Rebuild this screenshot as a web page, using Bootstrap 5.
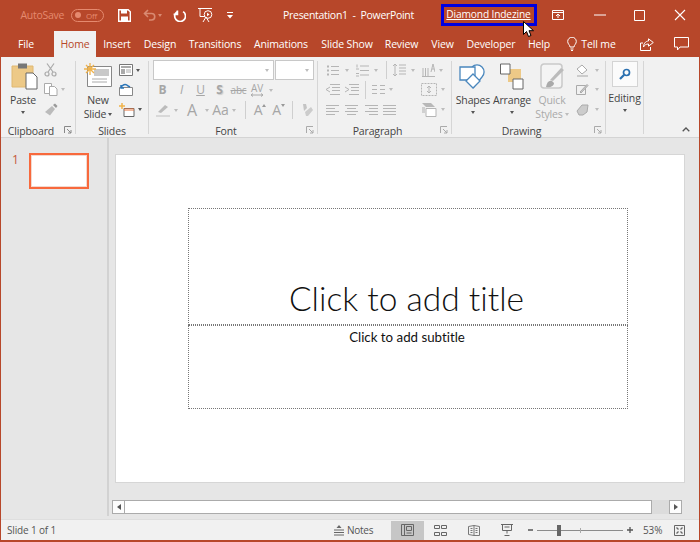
<!DOCTYPE html>
<html lang="en"><head><meta charset="utf-8"><title>PowerPoint</title>
<link href="https://cdn.jsdelivr.net/npm/bootstrap@5.3.0/dist/css/bootstrap.min.css" rel="stylesheet">
<style>
html,body{height:542px;overflow:hidden}
body{width:700px;background:#b7472a;font-family:"Open Sans","Liberation Sans",sans-serif;font-size:10.5px;letter-spacing:-.15px;color:#444;line-height:14px;padding:0 1px 1px 1px}
svg{display:block;flex:none}
.tbar{height:30px;margin-left:-1px;width:700px;color:#fff;display:grid;grid-template-columns:71px 47px 13px 12px 13px 8px 9px 13px 12px 16px 13px 6px 50px 131px 27px 96px 15px 11px 31px 12px 28px 11px 29px 12px;align-items:center;position:relative}
.tbar>*{justify-self:center}
.autosave{justify-self:end;padding-right:7px;color:#e58a6f;letter-spacing:-.3px}
.toggle{justify-self:start;width:33px;height:13px;border:1px solid #e58a6f;border-radius:7px;color:#e58a6f;font-size:8px;line-height:11px;display:flex;align-items:center;gap:5px;padding-left:3px}
.toggle i{width:6px;height:6px;border-radius:50%;background:#e58a6f;display:block}
.doc{white-space:nowrap;letter-spacing:-.3px}
.author{display:block;width:96px;height:22px;border:3px solid #0000e0;color:#fff;text-decoration:underline;text-align:center;line-height:15px;font-size:10.2px;white-space:nowrap;padding-right:1px}
.author:hover{color:#fff}
.cursor{position:absolute;left:523px;top:21px}
.tabs{height:27px;margin-left:-1px;width:700px;color:#fff;display:grid;grid-template-columns:4px 44px 6px 42px 42px 44px 66px 66px 66px 43px 39px 58px 38px 67px 43px 27px;align-items:end}
.tabs>*{height:26px;display:flex;align-items:center;justify-content:center;white-space:nowrap}
.tabs .active{background:#f1f1f1;color:#b7472a}
.ribbon{height:81px;background:#f1f1f1;display:flex;border-bottom:1px solid #d4d4d4}
.group{padding-top:3px;display:flex;flex-direction:column}
.g1{width:74px}.g2{width:72px}.g3{width:168px}.g4{width:133px}.g5{width:153px}.g6{width:37px}
.sep{width:1px;background:#d6d6d6;margin:4px 0 3px}
.body{height:64px;display:flex}
.lbl{height:14px;display:flex;align-items:center}
.lbl span{flex:1;text-align:center;padding-top:1px}
.launch{width:14px;display:flex;justify-content:center}
.big{display:flex;flex-direction:column;align-items:center;white-space:nowrap}
.big .art{height:33px;display:flex;align-items:center;justify-content:center;padding-bottom:1px}
.big .cap{height:14px;display:flex;align-items:center;gap:2px}
.big .car{height:11px;display:flex;align-items:center}
.off{color:#a9a9a9}
.car-i{width:0;height:0;border-left:2.5px solid transparent;border-right:2.5px solid transparent;border-top:3px solid #555;display:block}
.off .car-i,.car-g{border-top-color:#bdbdbd}
.sm{display:flex;flex-direction:column}
.sm>div{display:flex;align-items:center;gap:3px}
.sm>div:nth-child(1){height:20px}.sm>div:nth-child(2){height:19px}.sm>div:nth-child(3){height:21px}
.col-paste{width:40px;margin-left:2px}.clip-s{margin-left:1px}
.col-new{width:36px;margin-left:4px}.new-s{margin-left:3px}
.fields{display:flex;gap:1px;height:20px;margin-left:4px}
.fields div{background:#fff;border:1px solid #c8c8c8;display:flex;align-items:center;justify-content:flex-end;padding-right:4px}
.f1{width:121px}.f2{width:39px}
.frow{display:grid;justify-items:center;align-items:center;margin-left:4px;color:#a6a6a6;font-size:12px;line-height:14px;height:20px}
.fr2{grid-template-columns:19px 19px 19px 19px 19px 18px 10px}
.fr3{grid-template-columns:20px 6px 26px 4px 23px 4px 18px 12px 25px 2px 26px}
.shadow-s{text-shadow:1px 1px 1px #ccc}
.abc{font-size:10px;text-decoration:line-through}
.av{display:flex;flex-direction:column;align-items:center;font-size:10px;line-height:10px}
.big-a{font-size:16px;display:flex}
.mid-a{font-size:14px}
.sup{display:flex;align-items:flex-start;font-size:14px;line-height:14px}
.sup svg{margin-top:1px}
.vb{width:1px;height:18px;background:#cfcfcf}
.prow{display:grid;justify-items:center;align-items:center;margin-left:7px}
.pr1{height:20px;grid-template-columns:15px 14px 16px 12px 8px 18px 10px 21px 4px}
.pr2{height:19px;grid-template-columns:15px 23px 4px 23px 2px 29px 16px 12px}
.pr3{height:21px;grid-template-columns:14px 6px 13px 7px 12px 6px 13px 25px 16px 12px}
.col-sh{width:36px;margin-left:3px}.col-ar{width:38px;margin-left:2px}.col-qs{width:36px;margin-left:3px}
.dr-s{margin-left:6px}.dr-s>div{gap:6px}
.ed-btn{width:26px;height:26px;background:#fbfbfb;border:1px solid #d4d4d4;display:flex;align-items:center;justify-content:center;margin-top:1px}
.ed{width:37px}
.coll{flex:1;display:flex;flex-direction:column;justify-content:flex-end;align-items:flex-end;padding:0 9px 5px 0}
.main{height:381px;background:#e6e6e6;display:flex}
.thumbs{width:108px;border-right:2px solid #d2d2d2;padding:15px 0 0 11px;display:flex;align-items:flex-start;font-size:12px;color:#c4583a;gap:10px;height:378px}
.thumb{width:60px;height:36px;background:#fff;border:2px solid #f8693c;outline:1px solid #f3d9cf;outline-offset:-3px}
.area{flex:1;display:flex;flex-direction:column;min-width:0}
.slide{margin:16px 14px 0 6px;height:329px;background:#fff;border:1px solid #d6d6d6;display:flex;flex-direction:column;align-items:center;padding:53px 0 0 16px}
.ph{width:440px;border:1px dotted #777;text-align:center;color:#111;font-family:Lato,"Liberation Sans",sans-serif;font-variant-ligatures:none;letter-spacing:0}
.ph1{height:117px;font-size:33.500px;font-weight:300;line-height:40px;display:flex;align-items:flex-end;justify-content:center;padding:0 3px 6px 0}
.ph2{height:84px;font-size:13.300px;line-height:20px;padding:1px 2px 0 0}
.hs{margin:17px 17px 0 3px;height:14px;display:flex;align-items:stretch}
.hbtn{width:13px;background:#fdfdfd;border:1px solid #ababab;display:flex;align-items:center;justify-content:center}
.hthumb{flex:1;background:#fff;border:1px solid #ababab;margin-left:-1px}
.htrack{width:17px;background:#dcdcdc}
.status{height:21px;background:#f1f1f1;border-top:1px solid #dedede;display:flex;align-items:center;padding:0 14px 0 6px;font-size:10px;color:#555}
.spacer{flex:1}
.notes{display:flex;align-items:center;gap:3px;width:57px;letter-spacing:-.25px}
.view{height:19px;display:flex;align-items:center;justify-content:center;width:33px}
.view.on{background:#c6c6c6}
.zoom{display:flex;align-items:center;margin-left:5px}
.ztrack{width:86px;height:1px;background:#8c8c8c;margin:0 4px;display:flex;justify-content:center;position:relative}
.zthumb{position:absolute;left:20px;top:-5px;width:4px;height:11px;background:#666}
.zmid{width:1px;height:5px;margin-top:-2px;background:#aaa}
.pct{margin-left:10px;width:31px}
</style></head><body>

<header class="tbar">
 <span class="autosave">AutoSave</span>
 <span class="toggle"><i></i>Off</span>
 <svg width="13" height="13" viewBox="0 0 13 13"><path d="M.7.7h9.500l2.100 2.100v9.500H.7z" fill="none" stroke="#fff" stroke-width="1.400"/><path d="M3 1h6v3.500H3zM3 7.500h7V12H3z" fill="#fff"/></svg>
 <span></span>
 <svg width="13" height="12" viewBox="0 0 13 12"><path d="M5 1 1.500 4.500 5 8M2 4.500h6.500a3.200 3.200 0 0 1 0 6.500H6" fill="none" stroke="#d98a72" stroke-width="1.600"/></svg>
 <span class="car-i" style="border-top-color:#d98a72"></span>
 <span></span>
 <svg width="13" height="13" viewBox="0 0 13 13"><path d="M3.500 1.800A5.400 5.400 0 1 0 9.500 1.800M3.800 .6v4H0" fill="none" stroke="#fff" stroke-width="1.700" transform="translate(.6 .8)"/></svg>
 <span></span>
 <svg width="16" height="16" viewBox="0 0 16 16" fill="none" stroke="#fff"><path d="M0 1.500h14M2 1.500v8h5M8 10l-3 5M8 10l3 5"/><circle cx="10" cy="7.500" r="3.800"/><path d="M9 5.800v3.400l2.600-1.700z" fill="#fff" stroke="none"/></svg>
 <span></span>
 <svg width="6" height="7" viewBox="0 0 6 7"><path d="M0 0h6v1H0zM0 3h6L3 6.500z" fill="#fff"/></svg>
 <span></span>
 <span class="doc">Presentation1 &nbsp;-&nbsp; PowerPoint</span>
 <span></span>
 <a class="author" href="#">Diamond Indezine</a>
 <span></span>
 <svg width="12" height="10" viewBox="0 0 12 10" fill="none" stroke="#fff"><path d="M.5.500h11v9H.5zM.5 2.500h11M6 8V4M4 6l2-2 2 2"/></svg>
 <span></span>
 <svg width="12" height="2" viewBox="0 0 12 2"><path d="M0 1h12" stroke="#fff"/></svg>
 <span></span>
 <svg width="11" height="11" viewBox="0 0 11 11"><path d="M.5.500h10v10H.5z" fill="none" stroke="#fff"/></svg>
 <span></span>
 <svg width="12" height="12" viewBox="0 0 12 12"><path d="M1 1l10 10M11 1 1 11" stroke="#fff" stroke-width="1.100"/></svg>
 <svg class="cursor" width="11" height="17" viewBox="0 0 11 17"><path d="M.5.500v13l3-3 2 5 2.500-1-2-4.800h4.500z" fill="#fff" stroke="#000"/></svg>
</header>

<nav class="tabs">
 <span></span><span>File</span><span></span><span class="active">Home</span><span>Insert</span><span>Design</span><span>Transitions</span><span>Animations</span><span>Slide Show</span><span>Review</span><span>View</span><span>Developer</span><span>Help</span>
 <span class="gap-1"><svg width="10" height="14" viewBox="0 0 10 14" fill="none" stroke="#fff"><path d="M3 10C3 8 .7 7 .7 4.500a4.300 4.300 0 0 1 8.600 0C9.300 7 7 8 7 10zM3.500 12h3M4 13.500h2"/></svg>Tell me</span>
 <span><svg width="14" height="13" viewBox="0 0 14 13" fill="none" stroke="#fff"><path d="M3 5H.5v7.500h10V9M8.500 .8 13.300 4.500 8.500 8.200V6C6 6 4.500 7 3.500 9 3.500 6 5.500 3 8.500 3z"/></svg></span>
 <span><svg width="15" height="14" viewBox="0 0 15 14" fill="none" stroke="#fff"><path d="M.5.500h14v9.500H6L3.500 13v-3h-3z"/></svg></span>
</nav>

<section class="ribbon">
 <div class="group g1">
  <div class="body">
   <div class="big col-paste">
    <div class="art"><svg width="29" height="28" viewBox="0 0 29 28"><path d="M3 4h21v21H3z" fill="#edc987" stroke="#e0b870"/><path d="M9 1.500h9v5H9z" fill="#777"/><path d="M17 11h7l4 4v12H17z" fill="#fff" stroke="#666"/></svg></div>
    <div class="cap">Paste</div><div class="car"><i class="car-i"></i></div>
   </div>
   <div class="sm clip-s">
    <div><svg width="13" height="14" viewBox="0 0 13 14" fill="none" stroke="#aaa" stroke-width="1.200"><path d="M3 .5 9 9M10 .5 4 9"/><circle cx="3" cy="11" r="2"/><circle cx="10" cy="11" r="2"/></svg></div>
    <div><svg width="14" height="13" viewBox="0 0 14 13" fill="#fff" stroke="#aaa"><path d="M.5.500h7v10h-7z"/><path d="M5.500 3.500h5l2.500 2.500v6.500H5.500z"/></svg><i class="car-i car-g"></i></div>
    <div><svg width="14" height="13" viewBox="0 0 14 13"><path d="M1 9 8 3l3 3-5 6.500z" fill="#bbb"/><path d="M9 2l2-1.500 2.500 2.500L12 5z" fill="#999"/></svg></div>
   </div>
  </div>
  <div class="lbl"><span>Clipboard</span><div class="launch"><svg width="8" height="8" viewBox="0 0 8 8" fill="none" stroke="#888"><path d="M.5 7V.5H7M3 3l4 4M4 7h3V4"/></svg></div></div>
 </div>
 <div class="sep"></div>
 <div class="group g2">
  <div class="body">
   <div class="big col-new">
    <div class="art"><svg width="28" height="26" viewBox="0 0 28 26"><path d="M3.500 3.500h24v20h-24z" fill="#fff" stroke="#888"/><path d="M10 6h15v7H10z" fill="#c9c9c9"/><path d="M8 16h15M8 19h15" stroke="#aaa"/><path d="M6 0v12M0 6h12M2 2l8 8M10 2 2 10" stroke="#f0b24a" stroke-width="1.300"/></svg></div>
    <div class="cap">New</div><div class="cap">Slide<i class="car-i"></i></div>
   </div>
   <div class="sm new-s">
    <div><svg width="14" height="12" viewBox="0 0 14 12"><path d="M.5.500h13v11H.5z" fill="#fff" stroke="#777"/><path d="M2 2h10v2H2zM2 5h4v5H2z" fill="#aaa"/><path d="M7 6h5M7 8h5" stroke="#aaa"/></svg><i class="car-i"></i></div>
    <div><svg width="14" height="13" viewBox="0 0 14 13"><path d="M.5 4.500h13v8H.5z" fill="#fff" stroke="#888"/><path d="M2 5a4 4 0 0 1 7-2l2 1M2 2l0 3 3 0" fill="none" stroke="#2a75b8" stroke-width="1.500"/></svg></div>
    <div><svg width="16" height="14" viewBox="0 0 16 14"><path d="M5 5.500h10v8H5z" fill="#fff" stroke="#666"/><path d="M5 5h10v3H5z" fill="#e8743b" opacity=".5"/><path d="M0 3h6M3 0v6" stroke="#f0b24a" stroke-width="1.500"/></svg><i class="car-i"></i></div>
   </div>
  </div>
  <div class="lbl"><span>Slides</span></div>
 </div>
 <div class="sep"></div>
 <div class="group g3">
  <div class="body flex-column">
   <div class="fields"><div class="f1"><i class="car-i car-g"></i></div><div class="f2"><i class="car-i car-g"></i></div></div>
   <div class="frow fr2"><b>B</b><i>I</i><u>U</u><b class="shadow-s">S</b><span class="abc">abc</span><span class="av">AV<svg width="14" height="4" viewBox="0 0 14 4" fill="none" stroke="#aaa"><path d="M1 2h12M3 .5 1 2l2 1.500M11 .5 13 2l-2 1.500"/></svg></span><i class="car-i car-g"></i></div>
   <div class="frow fr3"><svg width="14" height="14" viewBox="0 0 14 14"><path d="M0 13h14" stroke="#d8d8d8" stroke-width="2"/><path d="M2 9 9 2l3 2-7 6z" fill="#bbb"/></svg><i class="car-i car-g"></i><span class="big-a">A</span><i class="car-i car-g"></i><span class="mid-a">Aa</span><i class="car-i car-g"></i><span class="vb"></span><span class="sup">A<svg width="4" height="3" viewBox="0 0 4 3"><path d="M0 3 2 0l2 3z" fill="#999"/></svg></span><span class="sup">A<svg width="4" height="3" viewBox="0 0 4 3"><path d="M0 0l2 3 2-3z" fill="#999"/></svg></span><span class="vb"></span><svg width="13" height="14" viewBox="0 0 13 14"><path d="M3 1h3l1 4-3 3z" fill="#c4c4c4"/><path d="M5 9l6-5 2 3-5 6H6z" fill="#ccc"/></svg></div>
  </div>
  <div class="lbl"><span>Font</span><div class="launch"><svg width="8" height="8" viewBox="0 0 8 8" fill="none" stroke="#aaa"><path d="M.5 7V.5H7M3 3l4 4M4 7h3V4"/></svg></div></div>
 </div>
 <div class="sep"></div>
 <div class="group g4">
  <div class="body flex-column">
   <div class="prow pr1">
    <svg width="12" height="11" viewBox="0 0 12 11" stroke="#b5b5b5"><path d="M4 1.500h8M4 5.500h8M4 9.500h8"/><path d="M0 1.500h2M0 5.500h2M0 9.500h2" stroke-width="2"/></svg>
    <i class="car-i car-g"></i>
    <svg width="13" height="13" viewBox="0 0 13 13" stroke="#b5b5b5"><path d="M4 2h9M4 6.500h9M4 11h9"/><path d="M1 .5v3M0 5h3M0 9.500h3M0 12h3"/></svg>
    <i class="car-i car-g"></i>
    <span class="vb"></span>
    <svg width="13" height="14" viewBox="0 0 13 14" stroke="#b5b5b5" fill="none"><path d="M6 2h7M6 5h7M6 8h7M6 11h7M2 1v12M0 3l2-2 2 2M0 11l2 2 2-2"/></svg>
    <i class="car-i car-g"></i>
    <svg width="13" height="14" viewBox="0 0 13 14" stroke="#b5b5b5" fill="none"><path d="M1 5v9M3.500 5v9M6 5v9M9 9l2-8 2 8M10 6h2M0 13.500h13" /></svg>
    <i class="car-i car-g"></i>
   </div>
   <div class="prow pr2">
    <svg width="15" height="11" viewBox="0 0 15 11" stroke="#b5b5b5" fill="none"><path d="M5 .5h10M7 3.500h8M7 6.500h8M5 10.500h10M5 3 1 5.500 5 8"/></svg>
    <svg width="15" height="11" viewBox="0 0 15 11" stroke="#b5b5b5" fill="none"><path d="M5 .5h10M7 3.500h8M7 6.500h8M5 10.500h10M1 3l4 2.500L1 8"/></svg>
    <span class="vb"></span>
    <svg width="13" height="11" viewBox="0 0 13 11" stroke="#b5b5b5" fill="none"><path d="M0 1.500h5M8 1.500h5M0 5.500h5M8 5.500h5M0 9.500h5M8 9.500h5"/></svg>
    <i class="car-i car-g"></i><span></span>
    <svg width="16" height="13" viewBox="0 0 16 13" stroke="#b5b5b5" fill="none"><path d="M.5.500h15v12H.5z" stroke-dasharray="2 1"/><path d="M8 3v7M6 5l2-2 2 2M6 8l2 2 2-2"/></svg>
    <i class="car-i car-g"></i>
   </div>
   <div class="prow pr3">
    <svg width="13" height="10" viewBox="0 0 13 10" stroke="#b5b5b5"><path d="M0 .5h13M0 3.500h9M0 6.500h13M0 9.500h9"/></svg><span></span>
    <svg width="13" height="10" viewBox="0 0 13 10" stroke="#b5b5b5"><path d="M0 .5h13M2 3.500h9M0 6.500h13M2 9.500h9"/></svg><span></span>
    <svg width="13" height="10" viewBox="0 0 13 10" stroke="#b5b5b5"><path d="M0 .5h13M4 3.500h9M0 6.500h13M4 9.500h9"/></svg><span></span>
    <svg width="13" height="10" viewBox="0 0 13 10" stroke="#b5b5b5"><path d="M0 .5h13M0 3.500h13M0 6.500h13M0 9.500h13"/></svg>
    <span></span>
    <svg width="16" height="14" viewBox="0 0 16 14"><path d="M1 0h9l4 4H5z" fill="#b8b8b8"/><path d="M5 5.500h10v8H5z" fill="#fff" stroke="#b5b5b5"/><path d="M1 4h3v6H1z" fill="#d0d0d0"/></svg>
    <i class="car-i car-g"></i>
   </div>
  </div>
  <div class="lbl"><span>Paragraph</span><div class="launch"><svg width="8" height="8" viewBox="0 0 8 8" fill="none" stroke="#aaa"><path d="M.5 7V.5H7M3 3l4 4M4 7h3V4"/></svg></div></div>
 </div>
 <div class="sep"></div>
 <div class="group g5">
  <div class="body">
   <div class="big col-sh">
    <div class="art"><svg width="28" height="28" viewBox="0 0 28 28" fill="#fff" stroke="#4a87bd" stroke-width="1.300"><path d="M13 5a7 7 0 1 1 10 10L14 26"/><path d="M1 5h15v13H1z"/><path d="M14 12l7 7-7 7-7-7z"/></svg></div>
    <div class="cap">Shapes</div><div class="car"><i class="car-i"></i></div>
   </div>
   <div class="big col-ar">
    <div class="art"><svg width="24" height="27" viewBox="0 0 24 27"><path d="M8 6h13v13H8z" fill="#edc987"/><path d="M.5 1h9.500v10H.5z" fill="#fff" stroke="#666"/><path d="M13 16h10v10H13z" fill="#fff" stroke="#666"/></svg></div>
    <div class="cap">Arrange</div><div class="car"><i class="car-i"></i></div>
   </div>
   <div class="big col-qs off">
    <div class="art"><svg width="25" height="26" viewBox="0 0 25 26"><path d="M4 1h15a3 3 0 0 1 3 3v18a3 3 0 0 1-3 3H4a3 3 0 0 1-3-3V4a3 3 0 0 1 3-3z" fill="#f4f4f4" stroke="#c9c9c9" stroke-width="1.500"/><path d="M24 7 13 18l-3-1 11-12z" fill="#bbb"/><path d="M6 24c1-5 3-7 6-6l2 2c0 3-4 5-8 4z" fill="#aaa"/></svg></div>
    <div class="cap">Quick</div><div class="cap">Styles<i class="car-i"></i></div>
   </div>
   <div class="sm dr-s">
    <div><svg width="13" height="13" viewBox="0 0 13 13"><path d="M1 5l5-4 5 5-5 4z" fill="#fff" stroke="#aaa"/><path d="M1 12h11" stroke="#ccc" stroke-width="2"/></svg><i class="car-i car-g"></i></div>
    <div><svg width="13" height="13" viewBox="0 0 13 13" fill="none" stroke="#aaa"><path d="M.5 2.500h9v9h-9z"/><path d="M4 9l7-7.500 1 1L5 10z" fill="#ccc"/></svg><i class="car-i car-g"></i></div>
    <div><svg width="13" height="12" viewBox="0 0 13 12"><path d="M1 7l5-6h6l-1 7-4 3H3z" fill="#ccc" stroke="#aaa"/></svg><i class="car-i car-g"></i></div>
   </div>
  </div>
  <div class="lbl"><span>Drawing</span><div class="launch"><svg width="8" height="8" viewBox="0 0 8 8" fill="none" stroke="#aaa"><path d="M.5 7V.5H7M3 3l4 4M4 7h3V4"/></svg></div></div>
 </div>
 <div class="sep"></div>
 <div class="group g6">
  <div class="body">
   <div class="big ed">
    <div class="ed-btn"><svg width="12" height="12" viewBox="0 0 12 12" fill="none" stroke="#2a70b0" stroke-width="1.700"><circle cx="7.500" cy="4.500" r="3"/><path d="M5.200 6.800 1 11" stroke-width="2.200"/></svg></div>
    <div class="cap mt-1">Editing</div><div class="car"><i class="car-i"></i></div>
   </div>
  </div>
 </div>
 <div class="sep"></div>
 <div class="coll"><svg width="8" height="5" viewBox="0 0 8 5"><path d="M.7 4.300 4 1l3.300 3.300" fill="none" stroke="#555" stroke-width="1.300"/></svg></div>
</section>

<main class="main">
 <aside class="thumbs"><span>1</span><div class="thumb"></div></aside>
 <div class="area">
  <div class="slide">
   <div class="ph ph1">Click to add title</div>
   <div class="ph ph2">Click to add subtitle</div>
  </div>
  <div class="hs">
   <div class="hbtn"><svg width="4" height="6" viewBox="0 0 4 6"><path d="M4 0v6L0 3z" fill="#555"/></svg></div>
   <div class="hthumb"></div><div class="htrack"></div>
   <div class="hbtn"><svg width="4" height="6" viewBox="0 0 4 6"><path d="M0 0v6l4-3z" fill="#555"/></svg></div>
  </div>
 </div>
</main>

<footer class="status">
 <span>Slide 1 of 1</span><span class="spacer"></span>
 <span class="notes"><svg width="10" height="11" viewBox="0 0 10 11" fill="none" stroke="#666"><path d="M5 0 2.500 3h5z" fill="#666" stroke="none"/><path d="M0 5h10M0 7.500h10M0 10h10"/></svg>Notes</span>
 <span class="view on"><svg width="13" height="12" viewBox="0 0 13 12" fill="none" stroke="#666"><path d="M.5.500h12v11H.5zM3.500.500v11M5.500 2.500h5v4h-5zM5.500 9h5"/></svg></span>
 <span class="view"><svg width="13" height="11" viewBox="0 0 13 11" fill="none" stroke="#666"><path d="M.5.500h5v3h-5zM7.500.500h5v3h-5zM.5 7.500h5v3h-5zM7.500 7.500h5v3h-5z"/></svg></span>
 <span class="view"><svg width="12" height="11" viewBox="0 0 12 11" fill="none" stroke="#777"><path d="M.5 1.500 6 .5l5.500 1v9L6 10.500.5 9.500zM6 .5v10M2.500 3.500h2M2.500 5.500h2M2.500 7.500h2M7.500 3.500h2M7.500 5.500h2M7.500 7.500h2"/></svg></span>
 <span class="view"><svg width="12" height="12" viewBox="0 0 12 12" fill="none" stroke="#666"><path d="M0 .5h12M1.500.5v6h9v-6M6 6.500v3M3.500 11.500h5M3.500 3h5"/></svg></span>
 <div class="zoom">
  <svg width="5" height="2" viewBox="0 0 5 2"><path d="M0 1h5" stroke="#555" stroke-width="1.500"/></svg>
  <div class="ztrack"><i class="zmid"></i><i class="zthumb"></i></div>
  <svg width="6" height="6" viewBox="0 0 6 6"><path d="M0 3h6M3 0v6" stroke="#555" stroke-width="1.300"/></svg>
 </div>
 <span class="pct">53%</span>
 <svg width="11" height="11" viewBox="0 0 11 11" fill="none" stroke="#666"><path d="M.5.500h10v10H.5z"/><path d="M2.500 2.500l2 2M8.500 2.500l-2 2M2.500 8.500l2-2M8.500 8.500l-2-2" stroke-width="1.300"/></svg>
</footer>
</body></html>
